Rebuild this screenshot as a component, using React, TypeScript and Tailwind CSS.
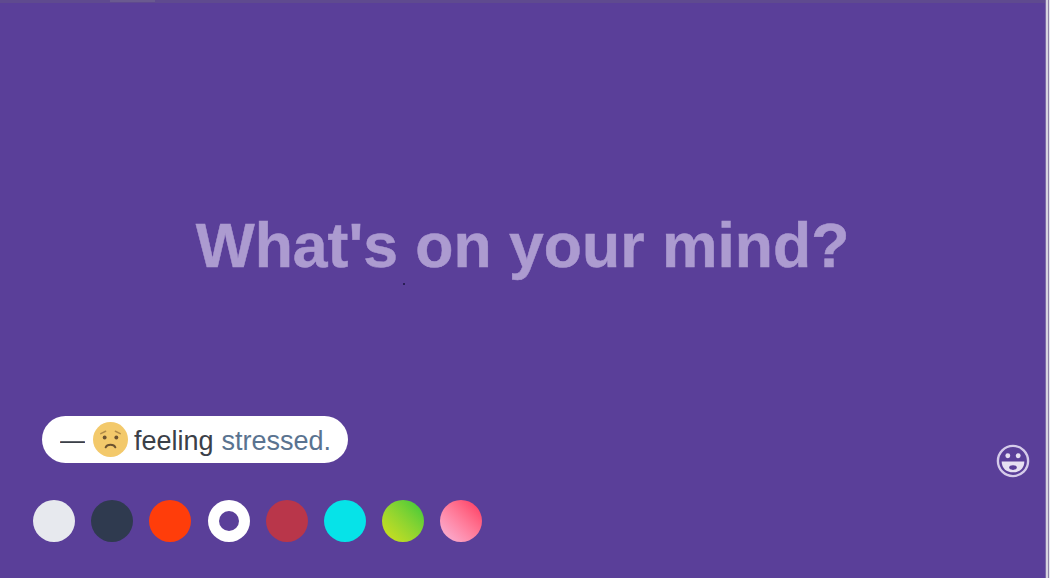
export default function App() {
  const swatches = [
    "bg-[#e7e9ee]",
    "bg-[#2f3a4f]",
    "bg-[#ff3d0a]",
    "bg-white",
    "bg-[#b9364a]",
    "bg-[#06e3e8]",
    "bg-gradient-to-tr from-[#d4e01a] to-[#1fc83a]",
    "bg-gradient-to-bl from-[#ff2a5c] to-[#f7b6dc]",
  ];

  return (
    <div className="flex h-[578px] w-[1050px] overflow-hidden bg-[#5a3f99] font-['Liberation_Sans',sans-serif]">
      <div className="flex min-w-0 flex-1 flex-col">
        <div className="flex h-[3px] bg-[#5f4a8f] pl-[110px]">
          <div className="h-[2px] w-[45px] bg-[#6a5a90]" />
        </div>
        <div className="relative flex h-[413px] items-center justify-center pt-[72px]">
          <h1 className="text-[62.500px] leading-none font-bold text-[#ac9bd0] [-webkit-text-stroke:0.5px_#ac9bd0]">What's on your mind?</h1>
          <div className="absolute top-[280px] left-[403px] h-[2px] w-[2px] rounded-full bg-[#1a1440]" />
        </div>

        <div className="flex items-start justify-between pr-[15px] pl-[42px]">
          <div className="flex h-[47px] w-[306px] items-center rounded-full bg-white pt-[3px] pl-[18px] text-[27px] text-[#3b4048]">
            <span className="w-[25px] overflow-hidden text-[25px]">—</span>
            <svg viewBox="0 0 36 36" className="mr-[6px] ml-[8px] h-[35px] w-[35px] -translate-y-[2px]">
              <circle cx="18" cy="18" r="18" fill="#f3c96b" />
              <path d="M8 12l5-2.500M28 12l-5-2.500" stroke="#b08a48" strokeWidth="1.500" fill="none" strokeLinecap="round" />
              <circle cx="12" cy="16" r="2" fill="#6b5230" />
              <circle cx="24" cy="16" r="2" fill="#6b5230" />
              <path d="M13 26c1.500-3.500 8.500-3.500 10 0" stroke="#6b5230" strokeWidth="2" fill="none" strokeLinecap="round" />
            </svg>
            <span>feeling</span>
            <span className="ml-[8px] text-[#5a7390]">stressed.</span>
          </div>
          <svg viewBox="0 0 36 36" className="mt-[28px] h-[34px] w-[34px]">
            <circle cx="18" cy="18" r="16" fill="none" stroke="#d5cbea" strokeWidth="2.500" />
            <circle cx="12.500" cy="12.500" r="2.600" fill="#e6e0f2" />
            <circle cx="23.500" cy="12.500" r="2.600" fill="#e6e0f2" />
            <path d="M6 18.500h24c0 7-5 11.500-12 11.500S6 25.500 6 18.500z" fill="#e6e0f2" />
            <ellipse cx="18" cy="25" rx="4" ry="2.400" fill="#5a3f99" />
          </svg>
        </div>

        <div className="mt-[22px] flex gap-[16.200px] pl-[33px]">
          {swatches.map((color, i) => (
            <div key={i} className={`flex h-[42px] w-[42px] items-center justify-center rounded-full ${color}`}>
              {i === 3 && <div className="h-[20px] w-[20px] rounded-full bg-[#5a3f99]" />}
            </div>
          ))}
        </div>
      </div>
      <div className="flex w-[5px]">
        <div className="w-[1px] bg-[#7d6ba8]" />
        <div className="w-[2px] bg-[#d8d5e0]" />
        <div className="w-[1px] bg-[#8e82a8]" />
        <div className="w-[1px] bg-[#e8e6ee]" />
      </div>
    </div>
  );
}
